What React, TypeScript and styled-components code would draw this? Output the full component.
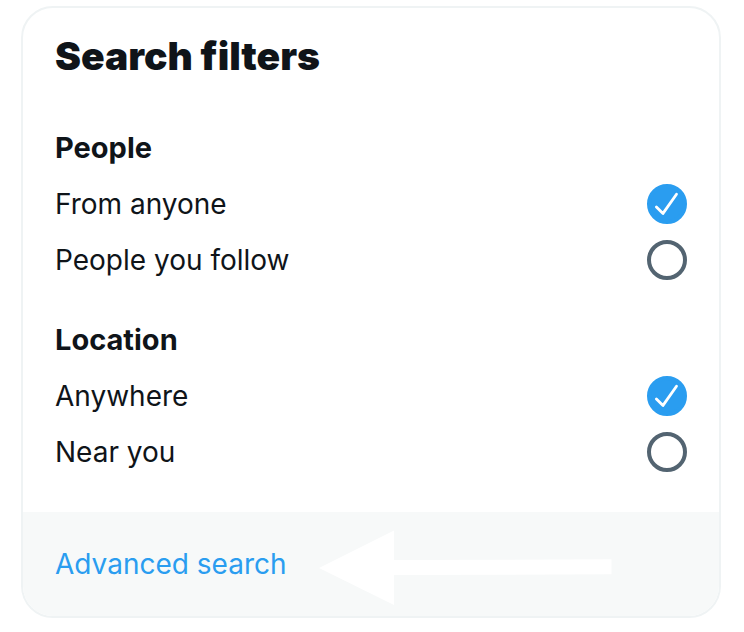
import React, { useState } from "react";
import styled, { createGlobalStyle } from "styled-components";

const GlobalStyle = createGlobalStyle`
  *, *::before, *::after { box-sizing: border-box; }
  body {
    margin: 0;
    background: #ffffff;
    color: #0f1419;
    font-family: Inter, "Liberation Sans", sans-serif;
  }
`;

const Page = styled.main`
  padding: 6px 23px 14px 21px;
`;

const Card = styled.section`
  border: 2px solid #eff3f4;
  border-radius: 32px;
  overflow: hidden;
`;

const Filters = styled.form`
  display: flex;
  flex-direction: column;
  gap: 40px;
  padding: 24px 32px 40px;
`;

const Title = styled.h1`
  margin: 0 0 8px;
  font-size: 39px;
  line-height: 48px;
  font-weight: 900;
`;

const Group = styled.fieldset`
  display: flex;
  flex-direction: column;
  gap: 16px;
  min-width: 0;
  margin: 0;
  padding: 0;
  border: 0;
`;

const GroupTitle = styled.legend`
  float: left;
  padding: 0;
  font-size: 29px;
  line-height: 40px;
  font-weight: 700;
`;

const Option = styled.label`
  display: flex;
  align-items: center;
  justify-content: space-between;
  font-size: 28px;
  line-height: 40px;
  cursor: pointer;
`;

const RadioBox = styled.span`
  display: grid;
  flex: none;

  > * {
    grid-area: 1 / 1;
  }
`;

const Radio = styled.input`
  appearance: none;
  width: 40px;
  height: 40px;
  margin: 0;
  border: 4px solid #536471;
  border-radius: 50%;
  cursor: pointer;

  &:checked {
    border-color: #2a9df0;
    background: #2a9df0;
  }
`;

const Check = styled.svg`
  width: 40px;
  height: 40px;
  pointer-events: none;
  visibility: hidden;

  ${Radio}:checked + & {
    visibility: visible;
  }
`;

const Footer = styled.footer`
  position: relative;
  padding: 32px;
  background: #f7f9f9;
`;

const AdvancedLink = styled.a`
  display: inline-block;
  color: #2a9df0;
  font-size: 28px;
  line-height: 40px;
  text-decoration: none;
  vertical-align: top;
`;

const Pointer = styled.svg`
  position: absolute;
  top: 18px;
  left: 296px;
  width: 293px;
  height: 76px;
  pointer-events: none;
`;

const groups = [
  { title: "People", options: ["From anyone", "People you follow"] },
  { title: "Location", options: ["Anywhere", "Near you"] },
];

function FilterGroup({ title, options }: { title: string; options: string[] }) {
  const [selected, setSelected] = useState(options[0]);
  return (
    <Group>
      <GroupTitle>{title}</GroupTitle>
      {options.map((option) => (
        <Option key={option}>
          {option}
          <RadioBox>
            <Radio
              type="radio"
              name={title}
              value={option}
              checked={selected === option}
              onChange={() => setSelected(option)}
            />
            <Check viewBox="0 0 40 40" aria-hidden="true">
              <path
                d="M9.4 22.9 16 29.4 29.5 10.2"
                fill="none"
                stroke="#fff"
                strokeWidth="2.8"
                strokeLinecap="round"
                strokeLinejoin="round"
              />
            </Check>
          </RadioBox>
        </Option>
      ))}
    </Group>
  );
}

export default function App() {
  return (
    <>
      <GlobalStyle />
      <Page>
        <Card>
          <Filters>
            <Title>Search filters</Title>
            {groups.map((group) => (
              <FilterGroup key={group.title} {...group} />
            ))}
          </Filters>
          <Footer>
            <AdvancedLink href="#advanced">Advanced search</AdvancedLink>
            <Pointer viewBox="0 0 293 76" aria-hidden="true">
              <path d="M0 38 75 .5V30L292.5 29.3V44.3L75 45V75Z" fill="#fff" />
            </Pointer>
          </Footer>
        </Card>
      </Page>
    </>
  );
}
